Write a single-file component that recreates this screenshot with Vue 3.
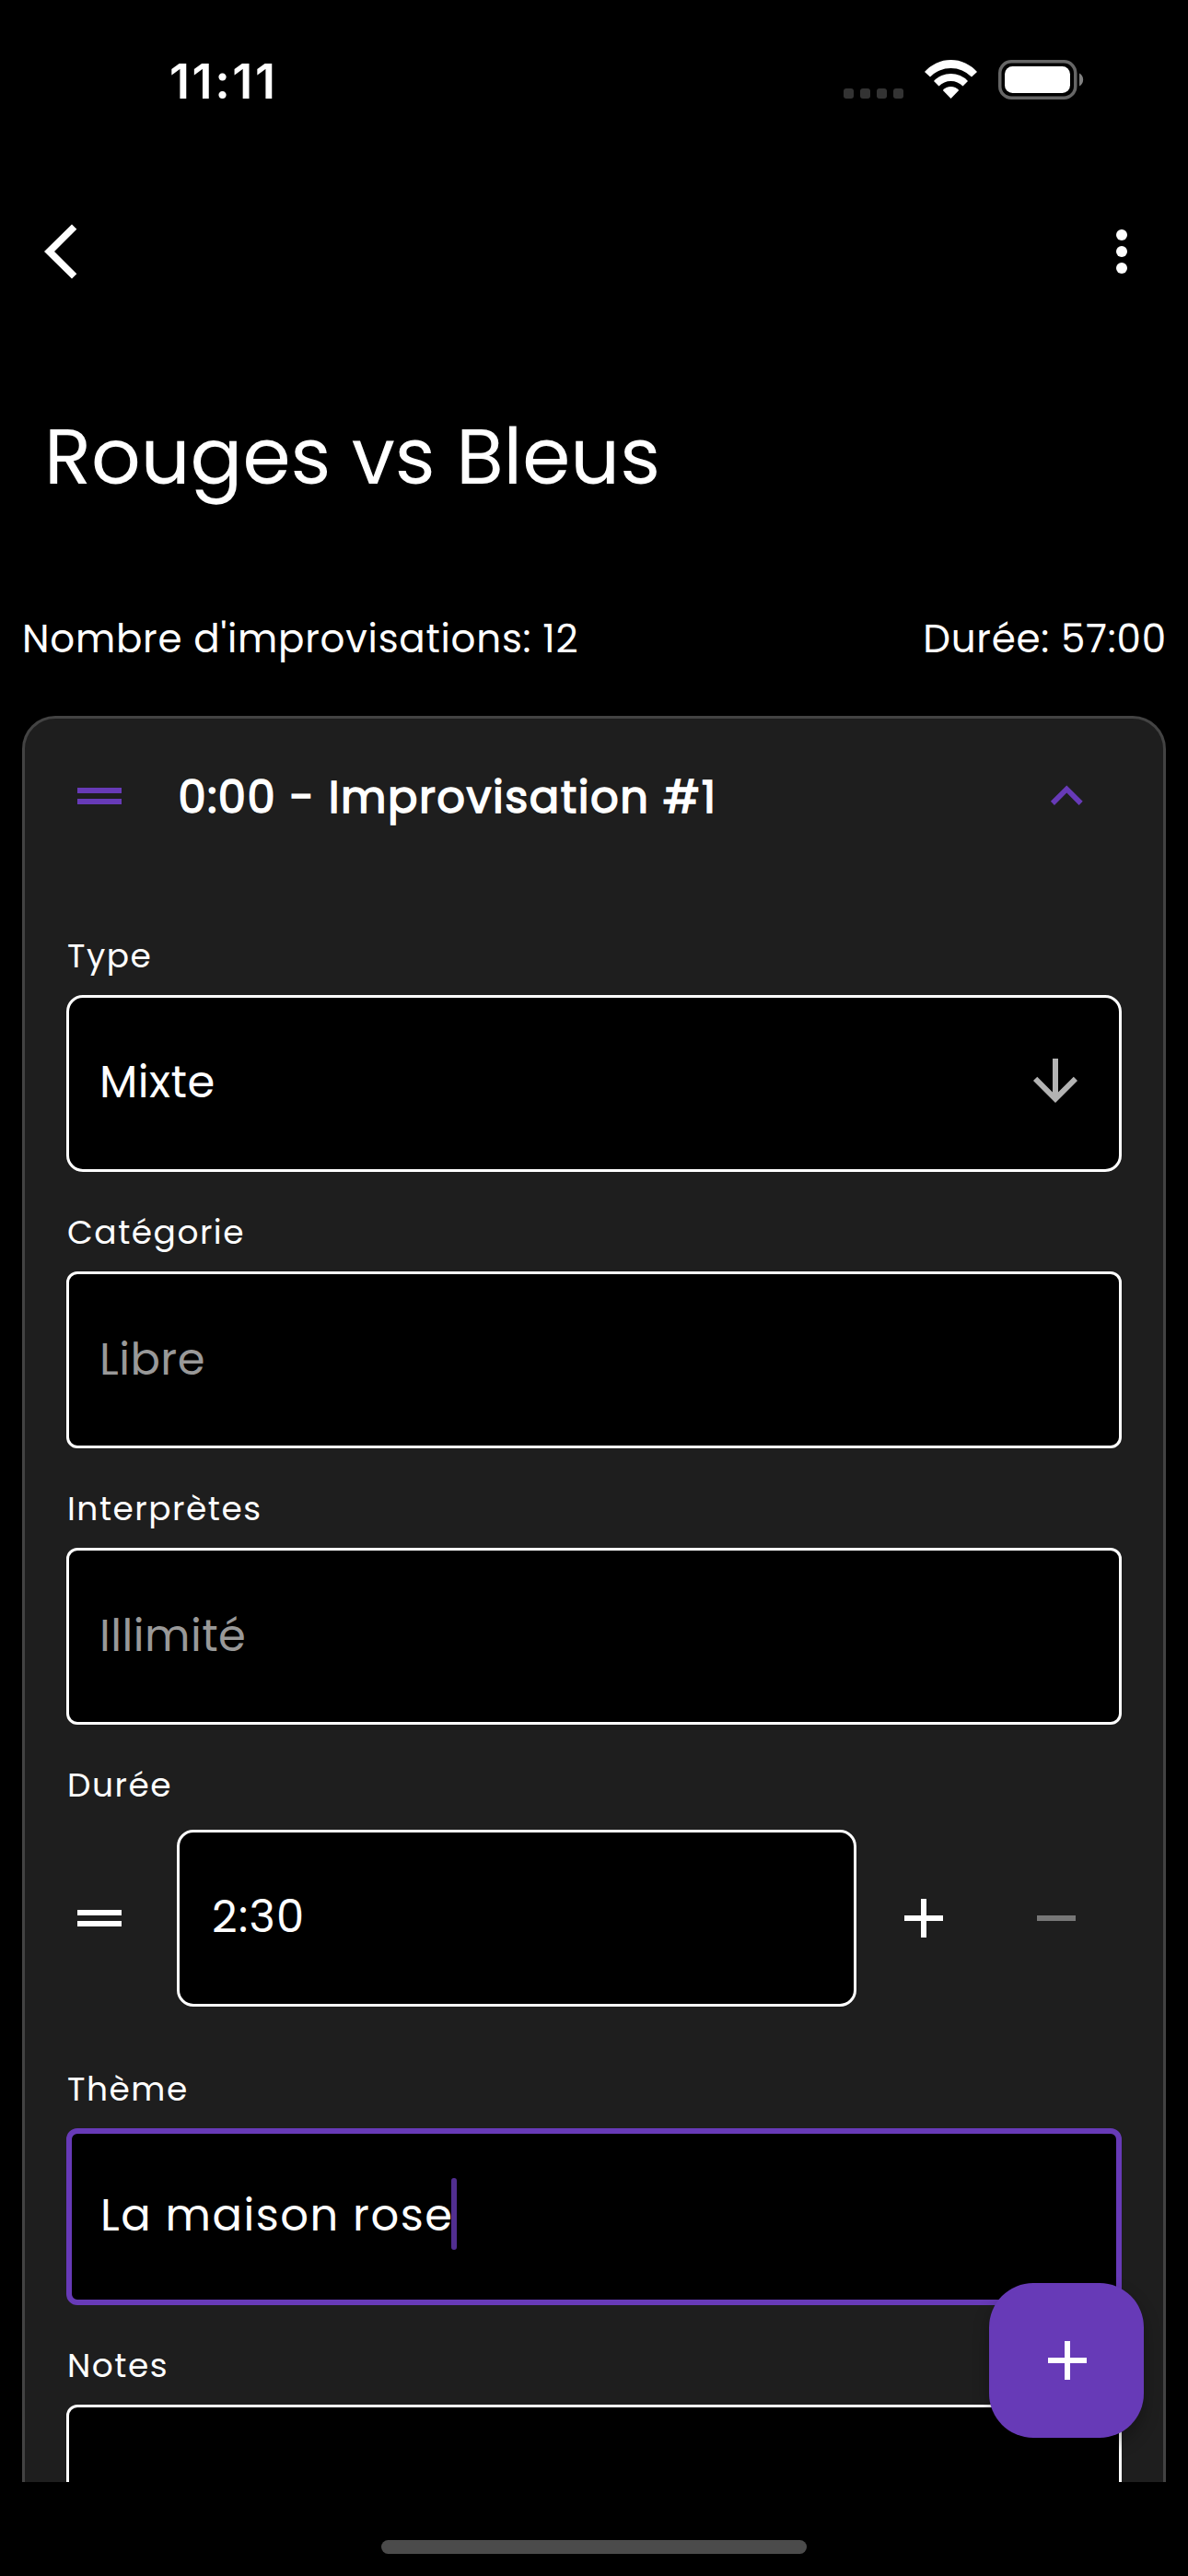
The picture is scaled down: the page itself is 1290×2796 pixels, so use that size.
<script setup>
const ICONS = {
  drag: 'M20 9H4v2h16V9zM4 15h16v-2H4v2z',
  collapse: 'M12 8l-6 6 1.410 1.410L12 10.830l4.590 4.580L18 14z',
  down: 'M20 12l-1.410-1.410L13 16.170V4h-2v12.170l-5.580-5.590L4 12l8 8 8-8z',
  add: 'M19 13h-6v6h-2v-6H5v-2h6V5h2v6h6v2z',
  remove: 'M19 13H5v-2h14v2z'
}
</script>

<template>
  <div class="screen">
    <div class="status">
      <span class="clock">11:11</span>
      <div class="indicators">
        <div class="signal"><i></i><i></i><i></i><i></i></div>
        <svg class="wifi" width="60" height="44" viewBox="0 0 60 44" fill="#fff">
          <path d="M1 14A37.7 37.7 0 0 1 58 14L52 19.5A31.4 31.4 0 0 0 7 19.5Z" />
          <path d="M11 24A25.4 25.4 0 0 1 48 24L42.5 29.5A18.1 18.1 0 0 0 16.5 29.5Z" />
          <path d="M20.8 34A11.5 11.5 0 0 1 38.2 34L29.5 43Z" />
        </svg>
        <svg class="battery" width="94" height="43" viewBox="0 0 94 43">
          <rect x="1.75" y="1.75" width="82" height="39.5" rx="12.5" fill="none" stroke="#666" stroke-width="3.5" />
          <rect x="7" y="7" width="71" height="29" rx="8.5" fill="#fff" />
          <path d="M88 14.5A8 8 0 0 1 88 28.5Z" fill="#808080" />
        </svg>
      </div>
    </div>

    <header class="appbar">
      <svg width="40" height="60" viewBox="0 0 40 60" fill="#fff"><path d="M30 .5L35.3 5.7 11 30 35.3 54.3 30 59.5 0 30Z" /></svg>
      <svg width="12" height="48" viewBox="0 0 12 48" fill="#fff">
        <circle cx="6" cy="6" r="6" /><circle cx="6" cy="24" r="6" /><circle cx="6" cy="42" r="6" />
      </svg>
    </header>

    <main class="content">
      <h1>Rouges vs Bleus</h1>
      <div class="meta">
        <span>Nombre d'improvisations: 12</span>
        <span>Durée: 57:00</span>
      </div>

      <section class="card">
        <div class="card-head">
          <svg class="icon accent" viewBox="0 0 24 24"><path :d="ICONS.drag" /></svg>
          <h2>0:00 - Improvisation #1</h2>
          <svg class="icon accent" viewBox="-.5 -.4 24.8 24.8"><path :d="ICONS.collapse" /></svg>
        </div>

        <label class="label">Type</label>
        <div class="box select">
          <span>Mixte</span>
          <svg class="icon arrow" viewBox="0 0 24 24"><path :d="ICONS.down" /></svg>
        </div>

        <label class="label">Catégorie</label>
        <div class="box"><span class="hint">Libre</span></div>

        <label class="label">Interprètes</label>
        <div class="box"><span class="hint">Illimité</span></div>

        <label class="label">Durée</label>
        <div class="duration">
          <svg class="icon" viewBox="0 0 24 24"><path :d="ICONS.drag" /></svg>
          <div class="box time"><span>2:30</span></div>
          <div class="step"><svg class="icon" viewBox="-.333 0 24 24"><path :d="ICONS.add" /></svg></div>
          <div class="step"><svg class="icon off" viewBox="-.333 0 24 24"><path :d="ICONS.remove" /></svg></div>
        </div>

        <label class="label spaced">Thème</label>
        <div class="box focus"><span>La maison rose</span><i class="caret"></i></div>

        <label class="label">Notes</label>
        <div class="box notes"></div>
      </section>
    </main>

    <footer class="home"><div class="bar"></div></footer>

    <button class="fab"><svg class="icon" viewBox="-.333 0 24 24"><path :d="ICONS.add" /></svg></button>
  </div>
</template>

<style scoped>
.screen { position: relative; width: 1290px; height: 2796px; overflow: hidden; display: flex; flex-direction: column; background: #000; color: #fff; font-family: Poppins, Inter, sans-serif; }
.status { flex: none; display: flex; justify-content: space-between; height: 177px; padding: 57px 112px 0 184px; box-sizing: border-box; }
.clock { font: 600 52px/63px Inter, sans-serif; letter-spacing: 2.6px; }
.indicators { display: flex; padding-top: 7px; align-items: flex-start; }
.signal { display: flex; gap: 7px; padding-top: 32px; margin-right: 22px; }
.signal i { width: 11px; height: 11px; border-radius: 3px; background: #333; }
.battery { margin: 1px 0 0 21px; }
.appbar { flex: none; display: flex; justify-content: space-between; align-items: center; height: 192px; padding: 0 66px 0 48px; box-sizing: border-box; }
.content { flex: none; height: 2325px; overflow: hidden; padding: 68px 24px 0; box-sizing: border-box; }
h1 { margin: 0 24px; font-weight: 400; font-size: 84px; line-height: 117px; }
.meta { display: flex; justify-content: space-between; margin: 110px -.8px 0 0; font-size: 42px; line-height: 59px; letter-spacing: .76px; }
.card { height: 2200px; margin-top: 54px; padding: 0 45px; box-sizing: border-box; border: 3px solid #434343; border-radius: 36px; background: #1e1e1e; }
.card-head { display: flex; align-items: center; height: 168px; margin-bottom: 64px; padding-right: 24px; }
h2 { flex: 1; margin: 3px 0 0 49.5px; font-weight: 400; font-size: 48px; line-height: 67px; letter-spacing: 1.5px; -webkit-text-stroke: 1.5px #fff; }
.icon { display: block; flex: none; width: 72px; height: 72px; fill: #fff; }
.accent { fill: #673ab7; }
.arrow { fill: #b3b3b3; }
.off { fill: #777; }
.label { display: block; margin-top: 40px; padding-left: 1px; font-size: 36px; line-height: 51px; letter-spacing: 1.5px; }
.card-head + .label { margin-top: 0; }
.label.spaced { margin-top: 64px; }
.box { display: flex; align-items: flex-start; height: 192px; margin-top: 17px; padding: 59px 33px 0; box-sizing: border-box; border: 3px solid #fff; border-radius: 12px; background: #000; font-size: 48px; line-height: 67px; letter-spacing: .45px; white-space: nowrap; }
.hint { color: #999; }
.select { justify-content: space-between; padding-top: 58px; border-radius: 18px; }
.select .arrow { margin-top: -4px; }
.duration { display: flex; align-items: center; margin-top: 23px; }
.time { flex: 1; margin: 0 0 0 48px; padding: 58px 35px 0; border-radius: 18px; letter-spacing: 1.3px; }
.step { display: flex; justify-content: center; width: 144px; }
.focus { padding: 55px 31px 0; border: 6px solid #673ab7; letter-spacing: 1.5px; }
.caret { width: 6px; height: 78px; margin: -7px 0 0 -2px; border-radius: 3px; background: #512e90; }
.notes { height: 400px; }
.home { flex: 1; display: flex; justify-content: center; padding-top: 63px; }
.bar { width: 462px; height: 15px; border-radius: 8px; background: #4b4b4b; }
.fab { position: absolute; left: 1074px; top: 2478px; display: flex; align-items: center; justify-content: center; width: 168px; height: 168px; padding: 0; border: 0; border-radius: 48px; background: #673ab7; box-shadow: 0 9px 18px rgba(0, 0, 0, .3); }
</style>

<style>
body { margin: 0; background: #000; }
</style>
